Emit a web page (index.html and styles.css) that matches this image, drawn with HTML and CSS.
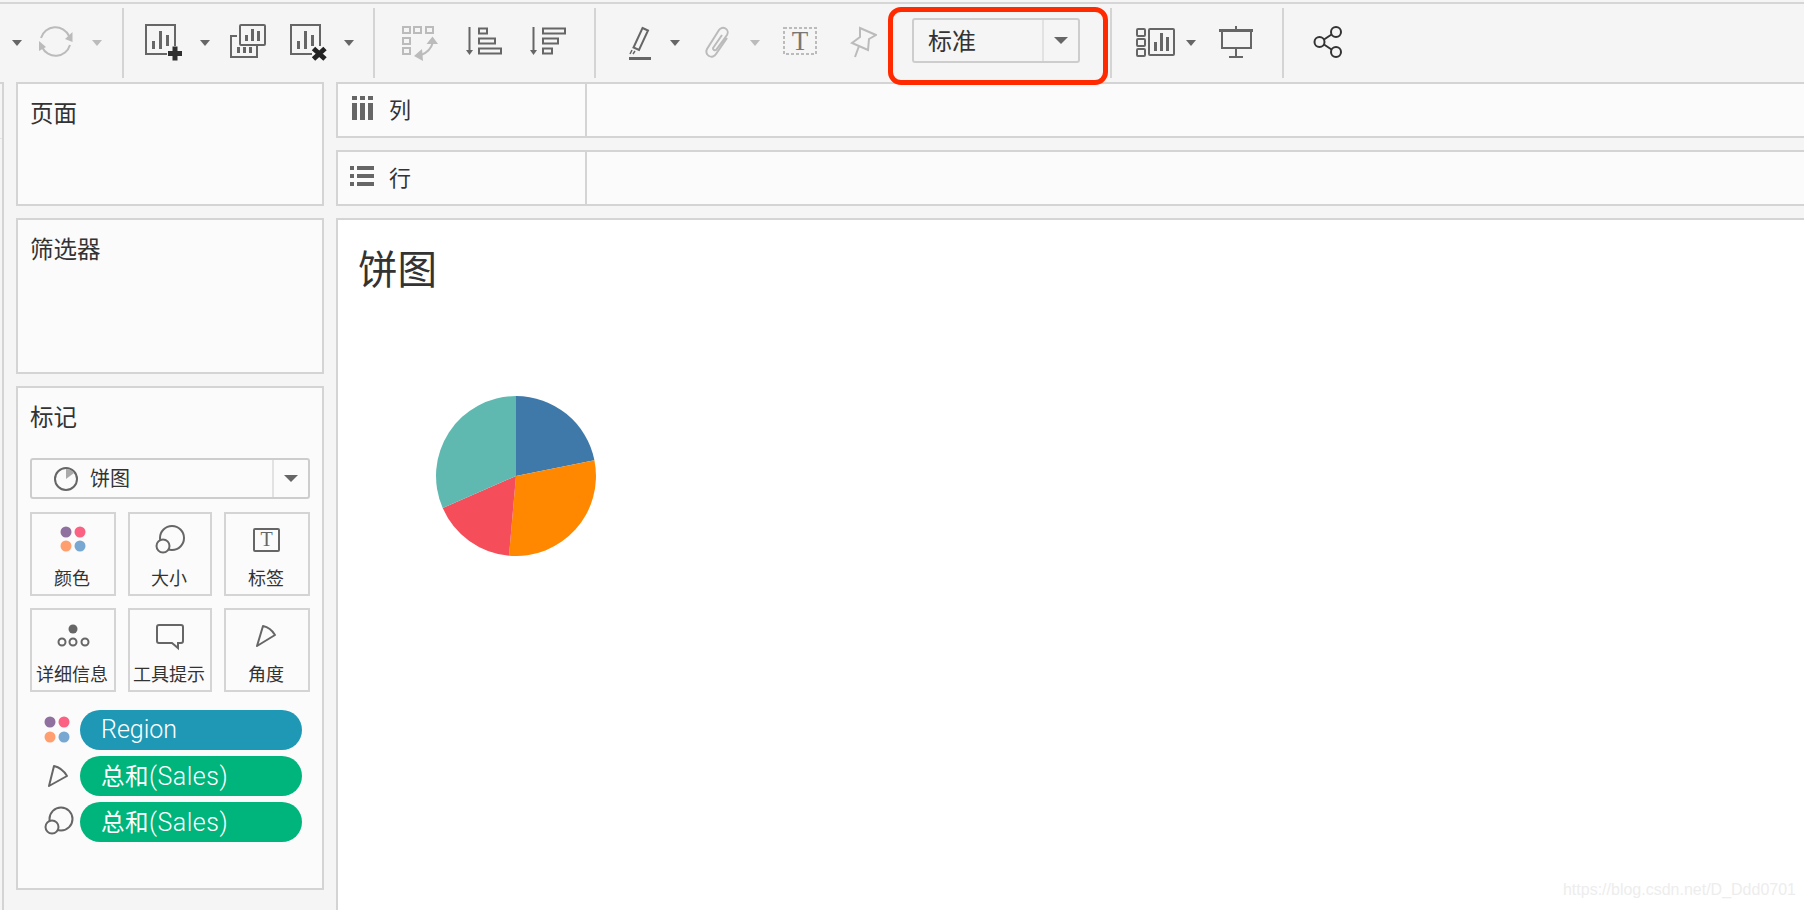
FILE: index.html
```html
<!DOCTYPE html>
<html lang="zh">
<head>
<meta charset="utf-8">
<title>饼图</title>
<link rel="stylesheet" href="styles.css">
</head>
<body>
<header class="toolbar">
  <i class="caret"></i>
  <svg class="ic light" width="36" height="70" viewBox="38 8 36 70"><path d="M41 38A15 15 0 0 1 69 36M70 45A15 15 0 0 1 42 47"/><path class="f" d="M72.500 32V42L65 39ZM39 41L46 47L39 51Z"/></svg>
  <i class="caret caret-light"></i>
  <i class="sep"></i>
  <svg class="ic" width="40" height="70" viewBox="144 8 40 70"><path d="M167 54H146V25H175V46"/><path class="f" d="M152 41h3v8h-3zM159 31h3v18h-3zM166 35h3v11h-3z"/><path class="f dark" d="M172.500 46.500h5v4.500h4.500v5h-4.500v4.500h-5v-4.500h-4.500v-5h4.500z"/></svg>
  <i class="caret"></i>
  <svg class="ic" width="38" height="70" viewBox="229 8 38 70"><rect x="240" y="25" width="25" height="20" rx="1"/><path d="M237 36H231V57H257V46"/><path class="f" d="M245 35h3v6h-3zM251 29h3v12h-3zM257 31h3v10h-3zM237 47h3v6h-3zM243 47h3v6h-3zM249 47h3v6h-3z"/></svg>
  <svg class="ic" width="38" height="70" viewBox="289 8 38 70"><path d="M312 54H291V25H320V46"/><path class="f" d="M297 41h3v8h-3zM304 31h3v18h-3zM311 35h3v11h-3z"/><path class="x" d="M313.500 48.500L325 59M325 48.500L313.500 59"/></svg>
  <i class="caret"></i>
  <i class="sep"></i>
  <svg class="ic light" width="38" height="70" viewBox="401 8 38 70"><rect x="403" y="27" width="7" height="6"/><rect x="414" y="27" width="7" height="6"/><rect x="426" y="27" width="7" height="6"/><rect x="403" y="38" width="7" height="6"/><rect x="403" y="48" width="7" height="6"/><path d="M433 42A19 19 0 0 1 421 55"/><path class="f" d="M426.500 44L432.500 36.500L438 44ZM422 49L414 56L423 61Z"/></svg>
  <svg class="ic" width="38" height="70" viewBox="465 8 38 70"><path d="M469.500 27V51M479 28.500h8v5h-8zM479 38.500h16v5h-16zM479 48.500h22v5h-22z"/><path class="f" d="M466 50h7l-3.500 5z"/></svg>
  <svg class="ic" width="38" height="70" viewBox="529 8 38 70"><path d="M533.500 27V51M543 28.500h22v5h-22zM543 38.500h15v5h-15zM543 48.500h9v5h-9z"/><path class="f" d="M530 50h7l-3.500 5z"/></svg>
  <i class="sep"></i>
  <svg class="ic" width="24" height="70" viewBox="628 8 24 70"><path d="M642.500 28L648 30.500L639 50L633.500 47.500Z"/><path class="thin" d="M632 50l-2 4M635 51l-2 3"/><path class="f" d="M629 57h22v3h-22z"/></svg>
  <i class="caret"></i>
  <svg class="ic light" width="26" height="70" viewBox="704 8 26 70"><path d="M727 38L716 54A5 5 0 0 1 707 49L719 30A4.500 4.500 0 0 1 727 35L716 50A2 2 0 0 1 713 48L722 35"/></svg>
  <i class="caret caret-light"></i>
  <svg class="ic light" width="36" height="70" viewBox="782 8 36 70"><rect class="dash" x="784" y="28" width="32" height="26"/><text class="t-glyph" x="800" y="50">T</text></svg>
  <svg class="ic light" width="27" height="70" viewBox="850 8 27 70"><path d="M860 28L876 35L869 39L868 50L852 43L860 37ZM859 46L855 57"/></svg>
  <div class="select">
    <span class="select-text">标准</span>
    <span class="select-arrow"><i class="tri"></i></span>
    <div class="callout"></div>
  </div>
  <i class="sep"></i>
  <svg class="ic" width="40" height="70" viewBox="1135 8 40 70"><rect x="1137" y="29" width="8" height="7" rx="1"/><rect x="1137" y="39" width="8" height="7" rx="1"/><rect x="1137" y="49" width="8" height="7" rx="1"/><rect x="1149" y="29" width="25" height="26" rx="1"/><path class="f" d="M1154 42h3v9h-3zM1160 33h3v18h-3zM1166 37h3v14h-3z"/></svg>
  <i class="caret"></i>
  <svg class="ic" width="36" height="70" viewBox="1218 8 36 70"><path class="f" d="M1219 29h34v3h-34zM1235 26h2v3h-2z"/><path d="M1222 32V48H1251V32M1236 48V57M1229 57H1243"/></svg>
  <i class="sep"></i>
  <svg class="ic share" width="30" height="70" viewBox="1313 8 30 70"><circle cx="1336" cy="32" r="5"/><circle cx="1319.500" cy="42" r="5"/><circle cx="1336" cy="52" r="5"/><path d="M1324 39.500L1331.500 34.500M1324 44.500L1331.500 49.500"/></svg>
</header>

<main class="main">
  <div class="rail"><div class="rail-top"></div></div>

  <aside class="side">
    <section class="panel panel-pages"><h2 class="panel-title">页面</h2></section>
    <section class="panel panel-filters"><h2 class="panel-title">筛选器</h2></section>
    <section class="panel panel-marks">
      <h2 class="panel-title">标记</h2>
      <div class="mark-type">
        <svg class="ic mark-pie" width="26" height="26" viewBox="0 0 26 26"><circle cx="13" cy="13" r="11"/><path class="f soft" d="M13 13V3A10 10 0 0 1 21 7Z"/></svg>
        <span class="mark-name">饼图</span>
        <span class="mark-arrow"><i class="tri"></i></span>
      </div>
      <div class="cards">
        <div class="card">
          <svg class="card-ic" width="40" height="36" viewBox="0 0 40 36"><circle class="d1" cx="13" cy="11" r="5.500"/><circle class="d2" cx="27" cy="11" r="5.500"/><circle class="d3" cx="13" cy="25" r="5.500"/><circle class="d4" cx="27" cy="25" r="5.500"/></svg>
          <span>颜色</span>
        </div>
        <div class="card">
          <svg class="card-ic ic" width="40" height="36" viewBox="0 0 40 36"><circle cx="22" cy="17" r="12"/><circle class="hole" cx="13" cy="25" r="6.500"/></svg>
          <span>大小</span>
        </div>
        <div class="card">
          <svg class="card-ic ic" width="40" height="36" viewBox="0 0 40 36"><rect x="7" y="8" width="25" height="22" rx="1"/><text class="t-glyph t-small" x="19.500" y="25">T</text></svg>
          <span>标签</span>
        </div>
        <div class="card">
          <svg class="card-ic" width="40" height="36" viewBox="0 0 40 36"><circle class="solid" cx="20" cy="12" r="4.500"/><g class="ic"><circle cx="9" cy="25" r="3.500"/><circle cx="20" cy="25" r="3.500"/><circle cx="32" cy="25" r="3.500"/></g></svg>
          <span>详细信息</span>
        </div>
        <div class="card">
          <svg class="card-ic ic" width="40" height="36" viewBox="0 0 40 36"><path d="M9 8H31C32 8 33 9 33 10V24C33 25 32 26 31 26H28V31L22 26H9C8 26 7 25 7 24V10C7 9 8 8 9 8Z"/></svg>
          <span>工具提示</span>
        </div>
        <div class="card">
          <svg class="card-ic ic" width="40" height="36" viewBox="0 0 40 36"><path d="M10 29L16 9C21 10 25 13 28 18Z" stroke-linejoin="round"/></svg>
          <span>角度</span>
        </div>
      </div>
      <div class="pills">
        <div class="pill-row">
          <svg class="pill-ic" width="36" height="40" viewBox="0 0 36 40"><circle class="d1" cx="10" cy="12" r="5.500"/><circle class="d2" cx="24" cy="12" r="5.500"/><circle class="d3" cx="10" cy="27" r="5.500"/><circle class="d4" cx="24" cy="27" r="5.500"/></svg>
          <div class="pill pill-blue">Region</div>
        </div>
        <div class="pill-row">
          <svg class="pill-ic ic" width="36" height="40" viewBox="0 0 36 40"><path d="M9 30L14 10C19 11 24 15 27 20Z" stroke-linejoin="round"/></svg>
          <div class="pill pill-green"><span class="pill-cjk">总和</span>(Sales)</div>
        </div>
        <div class="pill-row">
          <svg class="pill-ic ic" width="36" height="40" viewBox="0 0 36 40"><circle cx="21" cy="17" r="11.500"/><circle class="hole" cx="12" cy="25" r="6.500"/></svg>
          <div class="pill pill-green"><span class="pill-cjk">总和</span>(Sales)</div>
        </div>
      </div>
    </section>
  </aside>

  <div class="work">
    <div class="shelf">
      <div class="shelf-label">
        <svg class="shelf-ic" width="24" height="24" viewBox="-2 0 24 24"><path d="M0 0h5v4h-5zM0 7h5v17h-5zM8 0h5v4h-5zM8 7h5v17h-5zM16 0h5v4h-5zM16 7h5v17h-5z"/></svg>
        <span>列</span>
      </div>
    </div>
    <div class="shelf">
      <div class="shelf-label">
        <svg class="shelf-ic" width="24" height="24" viewBox="0 0 24 24"><path d="M0 2h4v4h-4zM7 2h17v4h-17zM0 10h4v4h-4zM7 10h17v4h-17zM0 18h4v4h-4zM7 18h17v4h-17z"/></svg>
        <span>行</span>
      </div>
    </div>
    <section class="canvas">
      <h1 class="view-title">饼图</h1>
      <svg class="pie" width="160" height="160" viewBox="0 0 160 160">
        <path fill="#3f79a9" d="M80 80V0A80 80 0 0 1 158.400 64.200Z"/>
        <path fill="#ff8800" d="M80 80L158.400 64.200A80 80 0 0 1 73 159.700Z"/>
        <path fill="#f54d5a" d="M80 80L73 159.700A80 80 0 0 1 6.700 112Z"/>
        <path fill="#5fb9b0" d="M80 80L6.700 112A80 80 0 0 1 80 0Z"/>
      </svg>
      <div class="watermark">https://blog.csdn.net/D_Ddd0701</div>
    </section>
  </div>
</main>
</body>
</html>
```
FILE: styles.css
```css
* { box-sizing: border-box; }
html, body { margin: 0; height: 100%; overflow: hidden; }
body {
  background: #f5f5f5;
  color: #333;
  font-family: "Noto Sans CJK SC", "Noto Sans", sans-serif;
}

/* toolbar */
.toolbar {
  margin-top: 2px;
  height: 80px;
  border-top: 2px solid #d6d6d6;
  padding: 4px 0 0 12px;
  display: grid;
  grid-template-columns: 27px 53px 31px 22px 55px 30px 60px 54px 30px 28px 64px 64px 65px 34px 41px 35px 45px 33px 68px 61px 199px 25px 50px 33px 64px 31px auto;
  align-items: start;
  justify-items: start;
}
.toolbar > svg { margin-left: -1px; }
.caret {
  display: block;
  width: 0;
  height: 0;
  margin-top: 32px;
  border-style: solid;
  border-width: 6px 5px 0;
  border-color: #666 transparent transparent;
}
.caret-light { border-top-color: #bbb; }
.sep { display: block; width: 2px; height: 70px; margin-left: -1px; background: #d4d4d4; }

.ic { fill: none; stroke: #666; stroke-width: 2; }
.ic .f { fill: #666; stroke: none; }
.ic .f.dark { fill: #2f2f2f; }
.ic .x { stroke: #222; stroke-width: 5; }
.ic .thin { stroke-width: 1.500; }
.light { stroke: #bbb; }
.light .f { fill: #bbb; }
.dash { stroke-dasharray: 3 2; }
.t-glyph {
  font-family: "Liberation Serif", serif;
  font-size: 27px;
  text-anchor: middle;
  fill: #777;
  stroke: none;
}
.t-small { font-size: 20px; fill: #666; }
.share { stroke: #333; }

.select {
  position: relative;
  display: flex;
  width: 168px;
  height: 45px;
  margin-top: 10px;
  border: 2px solid #cdcdcd;
  border-radius: 3px;
}
.select-text { flex: 1; padding-left: 14px; font-size: 24px; line-height: 39px; color: #333; }
.select-arrow {
  width: 36px;
  border-left: 2px solid #e2e2e2;
  display: flex;
  align-items: center;
  justify-content: center;
}
.tri {
  display: block;
  width: 0;
  height: 0;
  border-style: solid;
  border-width: 7px 7px 0;
  border-color: #666 transparent transparent;
}
.callout {
  position: absolute;
  top: -13px;
  left: -26px;
  right: -30px;
  bottom: -24px;
  border: 5px solid #ff2a00;
  border-radius: 13px;
}

/* main layout */
.main { display: flex; height: 828px; }
.rail { width: 4px; border-right: 2px solid #d4d4d4; }
.rail-top { height: 57px; border-top: 2px solid #d4d4d4; border-bottom: 1px solid #e4e4e4; }
.side {
  width: 308px;
  margin-left: 12px;
  flex: none;
  display: flex;
  flex-direction: column;
  gap: 12px;
}
.panel {
  background: #fbfbfb;
  border: 2px solid #d4d4d4;
  padding: 11px 12px 0;
}
.panel-pages { height: 124px; }
.panel-filters { height: 156px; }
.panel-marks { height: 504px; }
.panel-title { margin: 0; font-size: 23.500px; font-weight: 400; line-height: 34px; color: #333; }

.mark-type {
  display: flex;
  align-items: center;
  height: 41px;
  margin-top: 25px;
  border: 2px solid #cdcdcd;
  border-radius: 3px;
}
.mark-pie { margin-left: 21px; }
.mark-name { flex: 1; margin-left: 11px; padding-bottom: 2px; font-size: 20px; }
.mark-arrow {
  width: 36px;
  height: 100%;
  border-left: 2px solid #e2e2e2;
  display: flex;
  align-items: center;
  justify-content: center;
}
.soft.f { fill: #aaa; }

.cards {
  display: grid;
  grid-template-columns: 86px 84px 86px;
  grid-auto-rows: 84px;
  gap: 12px;
  margin-top: 13px;
}
.card {
  border: 2px solid #d4d4d4;
  display: flex;
  flex-direction: column;
  align-items: center;
  padding: 7px 2px 0 0;
  font-size: 18px;
  line-height: 26px;
  color: #333;
  white-space: nowrap;
}
.card-ic { display: block; height: 36px; margin: 0 -2px 7px 0; }
.d1 { fill: #8f709f; }
.d2 { fill: #fb6183; }
.d3 { fill: #ff9f70; }
.d4 { fill: #78a8d2; }
.hole { fill: #fbfbfb; }
.solid { fill: #666; }

.pills { display: flex; flex-direction: column; gap: 6px; margin-top: 18px; margin-left: 10px; }
.pill-row { display: flex; gap: 4px; align-items: center; }
.pill {
  width: 222px;
  height: 40px;
  border-radius: 20px;
  padding-left: 21px;
  color: #fff;
  font-family: Roboto, "Noto Sans CJK SC", sans-serif;
  font-weight: 300;
  font-size: 25px;
  line-height: 39px;
}
.pill-cjk { font-family: "Noto Sans CJK SC", sans-serif; font-weight: 400; font-size: 23.500px; }
.pill-blue { background: #1f98b6; }
.pill-green { background: #00b57c; letter-spacing: 0.500px; }

/* work area */
.work {
  flex: 1;
  margin-left: 12px;
  display: flex;
  flex-direction: column;
  gap: 12px;
  min-width: 0;
}
.shelf {
  height: 56px;
  background: #fbfbfb;
  border: solid #d4d4d4;
  border-width: 2px 0 2px 2px;
}
.shelf-label {
  display: flex;
  align-items: center;
  gap: 15px;
  width: 249px;
  height: 100%;
  padding: 0 0 4px 12px;
  border-right: 2px solid #d4d4d4;
  font-size: 22px;
}
.shelf-ic { fill: #666; flex: none; }
.canvas {
  position: relative;
  flex: 1;
  background: #fff;
  border: solid #d4d4d4;
  border-width: 2px 0 0 2px;
  padding: 22px 0 0 20px;
}
.view-title { margin: 0; font-size: 39.500px; font-weight: 400; line-height: 50px; color: #333; }
.pie { display: block; margin: 104px 0 0 78px; }
.watermark {
  position: absolute;
  right: 8px;
  bottom: 11px;
  font-family: "Liberation Sans", sans-serif;
  font-size: 16px;
  color: #ededed;
}
```
